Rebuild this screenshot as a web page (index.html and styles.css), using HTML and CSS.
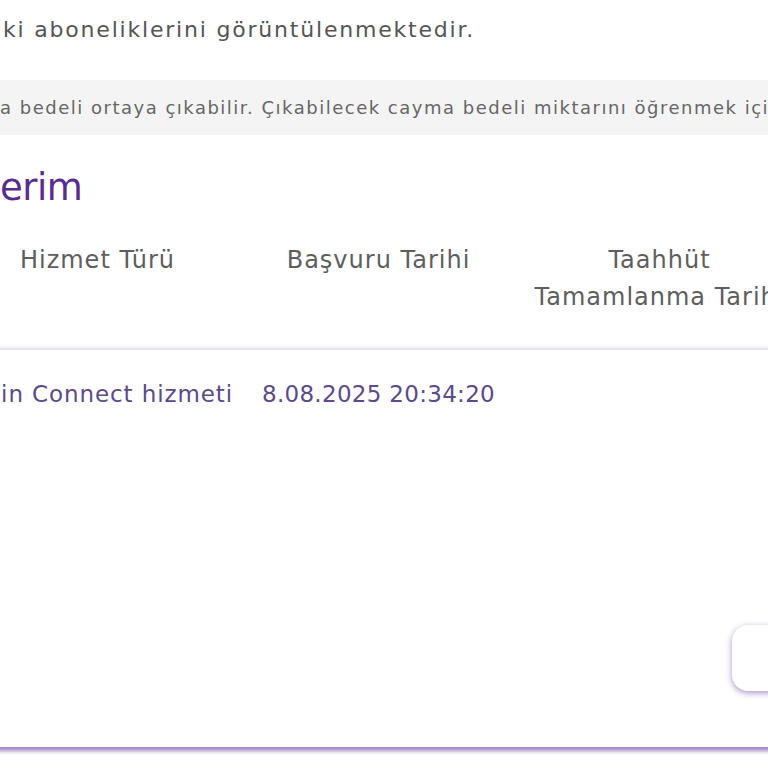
FILE: index.html
```html
<!DOCTYPE html>
<html>
<head>
  <title>Aboneliklerim</title>
  <link rel="stylesheet" href="styles.css">
</head>
<body>
  <div class="page">
    <p class="intro">ki aboneliklerini görüntülenmektedir.</p>

    <div class="notice">a bedeli ortaya çıkabilir. Çıkabilecek cayma bedeli miktarını öğrenmek için</div>

    <h2 class="title">erim</h2>

    <div class="cols head">
      <div>Hizmet Türü</div>
      <div>Başvuru Tarihi</div>
      <div>Taahhüt<br>Tamamlanma Tarihi</div>
    </div>

    <div class="card">
      <div class="cols row">
        <div class="first">in Connect hizmeti</div>
        <div class="date">8.08.2025 20:34:20</div>
        <div></div>
      </div>

      <div class="actions">
        <button class="btn"></button>
      </div>
    </div>
  </div>
</body>
</html>
```

FILE: styles.css
```css
/* Genel */
body {
  margin: 0;
  overflow: hidden;
  background-color: #fff;
  font-family: "DejaVu Sans", sans-serif;
  color: #555;
}

.page {
  margin-left: -43px;
  width: 1100px;
  padding-bottom: 20px;
}

.intro {
  margin: 0;
  padding-top: 15px;
  padding-left: 46px;
  font-size: 22px;
  line-height: 30px;
  letter-spacing: 1.8px;
  color: #555;
}

.notice {
  margin-top: 35px;
  height: 55px;
  line-height: 55px;
  padding-left: 43px;
  background-color: #f4f4f4;
  font-size: 18px;
  letter-spacing: 1.5px;
  color: #666;
  white-space: nowrap;
  overflow: hidden;
}

.title {
  margin: 29px 0 0 43px;
  font-size: 37px;
  line-height: 48px;
  letter-spacing: -0.5px;
  font-weight: 400;
  color: #5b2c90;
}

/* Tablo */
.cols {
  display: grid;
  grid-template-columns: 281px 281px 281px;
}

.head {
  margin-top: 30px;
  text-align: center;
  font-size: 24px;
  line-height: 37px;
  letter-spacing: 1px;
  color: #5e5e5e;
  white-space: nowrap;
}

.card {
  margin-top: 34px;
  width: 980px;
  height: 397px;
  background-color: #fff;
  box-shadow: 0 4px 4px rgba(110, 70, 170, 0.65), 0 -2px 4px rgba(120, 90, 200, 0.25);
}

.row {
  padding-top: 29px;
  font-size: 23px;
  line-height: 30px;
  letter-spacing: 0.9px;
  color: #5b4a8c;
  text-align: center;
}

.row .first {
  text-align: right;
  padding-right: 5px;
}

.row .date {
  letter-spacing: 0.3px;
}

.actions {
  display: flex;
  justify-content: flex-end;
  margin-top: 216px;
  padding-right: 45px;
}

.btn {
  width: 160px;
  height: 66px;
  border: none;
  border-radius: 16px;
  background-color: #fff;
  box-shadow: 0 2px 6px rgba(100, 60, 160, 0.55);
  cursor: pointer;
}
```
